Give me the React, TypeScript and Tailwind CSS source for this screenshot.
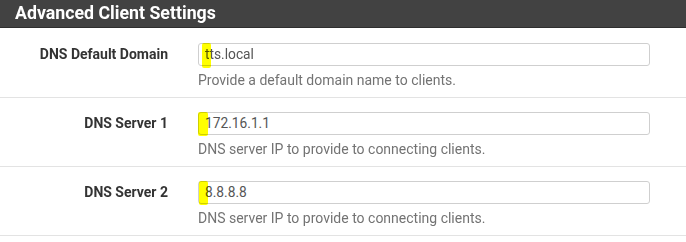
import React from "react";

type Row = {
  label: string;
  value: string;
  help: string;
  hl: { left: number; width: number; top: number; height: number };
  rowH: string;
  pt: string;
};

const rows: Row[] = [
  {
    label: "DNS Default Domain",
    value: "tts.local",
    help: "Provide a default domain name to clients.",
    hl: { left: 3, width: 9, top: 0, height: 25 },
    rowH: "h-[70px]",
    pt: "pt-[15px]",
  },
  {
    label: "DNS Server 1",
    value: "172.16.1.1",
    help: "DNS server IP to provide to connecting clients.",
    hl: { left: -1, width: 10, top: 0, height: 24 },
    rowH: "h-[69px]",
    pt: "pt-[14px]",
  },
  {
    label: "DNS Server 2",
    value: "8.8.8.8",
    help: "DNS server IP to provide to connecting clients.",
    hl: { left: 0, width: 9, top: 0, height: 24 },
    rowH: "h-[69px]",
    pt: "pt-[14px]",
  },
];

export default function App() {
  return (
    <div className="w-[686px] h-[242px] bg-white font-['Roboto',sans-serif] overflow-hidden">
      <div className="h-[28px] bg-[#424242] border-b border-[#2e2e2e] pl-[15px] flex items-center">
        <span className="text-white font-bold text-[17.75px] leading-none">Advanced Client Settings</span>
      </div>
      {rows.map((r) => (
        <div key={r.label} className={`flex border-b border-[#e3e3e3] ${r.rowH} ${r.pt}`}>
          <div className="w-[168px] shrink-0 text-right text-[14px] font-bold text-[#333] leading-[22px]">
            {r.label}
          </div>
          <div className="ml-[30px] w-[452px] flex flex-col">
            <div className="relative h-[23px] border border-[#cfcfcf] rounded-[3px] bg-white pl-[6px] text-[13.75px] text-[#555] leading-[21px]">
              {r.value}
              <span
                className="absolute bg-[#ffff00] mix-blend-multiply rounded-[2px]"
                style={{ left: r.hl.left, width: r.hl.width, top: r.hl.top - 1, height: r.hl.height }}
              />
            </div>
            <div className="mt-[5px] text-[14px] text-[#737373] leading-[19px]">{r.help}</div>
          </div>
        </div>
      ))}
    </div>
  );
}
